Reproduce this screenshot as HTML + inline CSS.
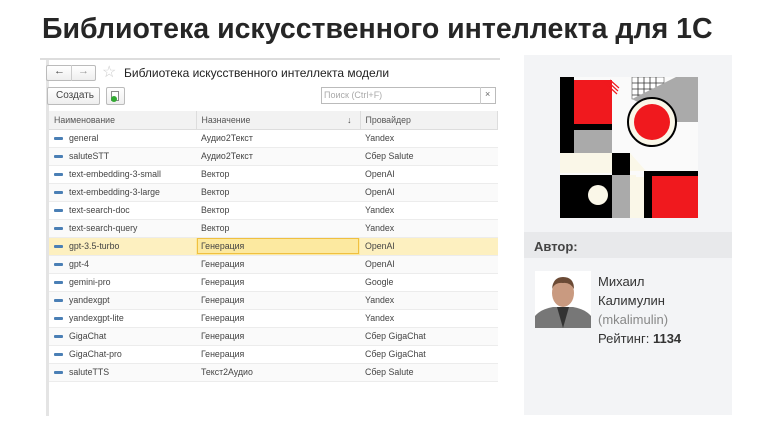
<!DOCTYPE html>
<html><head><meta charset="utf-8"><style>
*{margin:0;padding:0;box-sizing:border-box}
body{width:778px;height:428px;background:#fff;font-family:"Liberation Sans",Arial,sans-serif;position:relative;overflow:hidden;color:#333}
.title{position:absolute;left:42px;top:13px;font-size:28.5px;font-weight:bold;color:#262626;white-space:nowrap}
.hl{position:absolute;left:40px;top:58px;width:460px;height:2px;background:#ddd}
.vl{position:absolute;left:46px;top:60px;width:3px;height:356px;background:#e4e4e4}
.t{position:absolute;font-size:11px;color:#444;white-space:nowrap}
.btn{position:absolute;border:1px solid #bbb;border-radius:2px;background:linear-gradient(#fff,#eee)}
table{position:absolute;left:49px;top:111px;width:449px;border-collapse:collapse;font-size:8.8px;color:#444}
td{height:18px;padding:0 0 0 5px;border-bottom:1px solid #ececec;white-space:nowrap}
tr.h td{background:#f2f2f2;color:#555;border-right:1px solid #ddd;border-bottom:1px solid #ddd}
tr:nth-child(odd):not(.h) td{background:#fafafa}
tr.sel td{background:#fdf0c0}
tr.sel td.c{background:#fce9a0;outline:1.5px solid #f0c040;outline-offset:-2px}
.ic{display:inline-block;width:9px;height:3px;background:#4a7fb5;border-radius:1px;vertical-align:middle;margin:0 6px 0 0}
.side{position:absolute;left:524px;top:55px;width:208px;height:360px;background:#f3f4f6}
.ah{position:absolute;left:524px;top:232px;width:208px;height:26px;background:#e8e9eb;font-weight:bold;font-size:13px;color:#444;padding:7px 0 0 10px}
.au{position:absolute;left:598px;top:272px;font-size:13px;line-height:19px;color:#333}
</style></head><body>
<div class="title">Библиотека искусственного интеллекта для 1С</div>
<div class="hl"></div>
<div class="vl"></div>
<div class="btn" style="left:46px;top:65px;width:50px;height:16px"></div>
<div style="position:absolute;left:71px;top:65px;width:1px;height:16px;background:#ccc"></div>
<div class="t" style="left:54px;top:65px;font-size:11px">&#8592;</div>
<div class="t" style="left:78px;top:65px;font-size:11px;color:#999">&#8594;</div>
<div class="t" style="left:102px;top:62px;font-size:16px;color:#ccc">☆</div>
<div class="t" style="left:124px;top:66px;font-size:12px;color:#222">Библиотека искусственного интеллекта модели</div>
<div class="btn" style="left:47px;top:87px;width:53px;height:18px"></div>
<div class="t" style="left:56px;top:90px;font-size:10px">Создать</div>
<div class="btn" style="left:106px;top:87px;width:19px;height:18px"></div>
<div style="position:absolute;left:111px;top:91px;width:8px;height:10px;border:1px solid #888;background:#fff"></div>
<div style="position:absolute;left:111px;top:96px;width:6px;height:6px;border-radius:50%;background:#3a3"></div>
<div style="position:absolute;left:321px;top:87px;width:175px;height:17px;border:1px solid #bbb;background:#fff"></div>
<div style="position:absolute;left:480px;top:87px;width:1px;height:17px;background:#ccc"></div>
<div class="t" style="left:324px;top:90px;font-size:9px;color:#aaa">Поиск (Ctrl+F)</div>
<div class="t" style="left:485px;top:89px;font-size:9px;color:#666">×</div>
<table>
<colgroup><col style="width:147px"><col style="width:164px"><col></colgroup>
<tr class="h"><td>Наименование</td><td>Назначение<span style="float:right;margin-right:8px">↓</span></td><td>Провайдер</td></tr>
<tr><td><span class="ic"></span>general</td><td>Аудио2Текст</td><td>Yandex</td></tr>
<tr><td><span class="ic"></span>saluteSTT</td><td>Аудио2Текст</td><td>Сбер Salute</td></tr>
<tr><td><span class="ic"></span>text-embedding-3-small</td><td>Вектор</td><td>OpenAI</td></tr>
<tr><td><span class="ic"></span>text-embedding-3-large</td><td>Вектор</td><td>OpenAI</td></tr>
<tr><td><span class="ic"></span>text-search-doc</td><td>Вектор</td><td>Yandex</td></tr>
<tr><td><span class="ic"></span>text-search-query</td><td>Вектор</td><td>Yandex</td></tr>
<tr class="sel"><td><span class="ic"></span>gpt-3.5-turbo</td><td class="c">Генерация</td><td>OpenAI</td></tr>
<tr><td><span class="ic"></span>gpt-4</td><td>Генерация</td><td>OpenAI</td></tr>
<tr><td><span class="ic"></span>gemini-pro</td><td>Генерация</td><td>Google</td></tr>
<tr><td><span class="ic"></span>yandexgpt</td><td>Генерация</td><td>Yandex</td></tr>
<tr><td><span class="ic"></span>yandexgpt-lite</td><td>Генерация</td><td>Yandex</td></tr>
<tr><td><span class="ic"></span>GigaChat</td><td>Генерация</td><td>Сбер GigaChat</td></tr>
<tr><td><span class="ic"></span>GigaChat-pro</td><td>Генерация</td><td>Сбер GigaChat</td></tr>
<tr><td><span class="ic"></span>saluteTTS</td><td>Текст2Аудио</td><td>Сбер Salute</td></tr>
</table>
<div class="side"></div>
<svg style="position:absolute;left:560px;top:77px" width="138" height="141" viewBox="0 0 138 141">
<rect width="138" height="141" fill="#fafafa"/>
<rect x="0" y="0" width="14" height="76" fill="#000"/>
<rect x="14" y="3" width="38" height="44" fill="#f0191e"/>
<rect x="14" y="47" width="38" height="6" fill="#000"/>
<rect x="14" y="53" width="38" height="23" fill="#aaa"/>
<rect x="72" y="0" width="32" height="22" fill="#fff" stroke="#333" stroke-width="0.5"/>
<path d="M72 6H104M72 12H104M72 18H104M78 0V22M84 0V22M90 0V22M96 0V22" stroke="#333" stroke-width="0.8"/>
<path d="M72 22L116 0H138V45H116Z" fill="#aaa"/>
<path d="M44 5L57 17M47 4L58 14M50 3L59 11" stroke="#f0191e" stroke-width="1.2"/>
<circle cx="92" cy="45" r="24" fill="#faf7e8" stroke="#000" stroke-width="2"/>
<circle cx="92" cy="45" r="18" fill="#f0191e"/>
<rect x="0" y="76" width="52" height="20" fill="#faf7e8"/>
<rect x="52" y="76" width="18" height="22" fill="#000"/>
<path d="M70 76L86 94H70Z" fill="#faf7e8"/>
<rect x="0" y="98" width="52" height="43" fill="#000"/>
<circle cx="38" cy="118" r="10" fill="#faf7e8"/>
<rect x="52" y="98" width="18" height="43" fill="#aaa"/>
<rect x="70" y="98" width="6" height="43" fill="#faf7e8"/>
<rect x="76" y="100" width="8" height="41" fill="#faf7e8"/>
<rect x="84" y="94" width="8" height="47" fill="#000"/>
<rect x="92" y="94" width="46" height="5" fill="#000"/>
<rect x="92" y="99" width="46" height="42" fill="#f0191e"/>
</svg>
<div class="ah">Автор:</div>
<svg style="position:absolute;left:535px;top:271px" width="56" height="57" viewBox="0 0 56 57">
<rect width="56" height="57" fill="#fff"/>
<path d="M0 57V45Q6 38 18 36H38Q50 38 56 45V57Z" fill="#777"/>
<path d="M22 36L28 57L34 36Z" fill="#333"/>
<ellipse cx="28" cy="22" rx="11" ry="14" fill="#c99a80"/>
<path d="M17 18Q18 6 28 6Q39 6 39 18Q35 11 28 12Q20 11 17 18Z" fill="#6b4a35"/>
</svg>
<div class="au">Михаил<br>Калимулин<br><span style="color:#888">(mkalimulin)</span><br>Рейтинг: <b>1134</b></div>
</body></html>
